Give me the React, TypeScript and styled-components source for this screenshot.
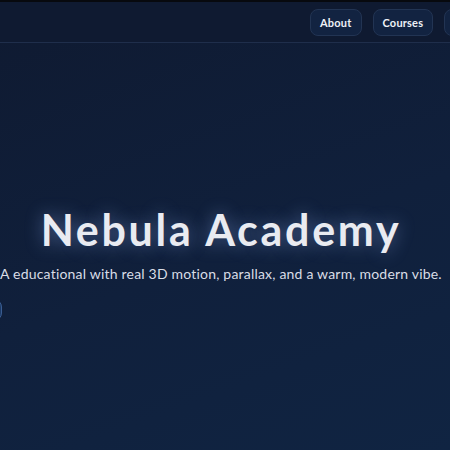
import React from "react";
import styled, { createGlobalStyle } from "styled-components";

const Global = createGlobalStyle`
  html, body {
    margin: 0;
    padding: 0;
    background: #0f1b33;
  }
  body {
    font-family: "Lato", "Open Sans", sans-serif;
    overflow: hidden;
  }
`;

const Page = styled.div`
  width: 450px;
  height: 450px;
  overflow: hidden;
  display: flex;
  flex-direction: column;
  background: linear-gradient(160deg, #0f1a31 0%, #10203c 55%, #102442 100%);
  border-top: 2px solid #07090e;
  box-sizing: border-box;
`;

const Header = styled.header`
  height: 41px;
  flex: none;
  display: flex;
  align-items: center;
  padding-left: 310px;
  background: #0f1a31;
  border-bottom: 1px solid #1f2e4b;
  box-sizing: border-box;
`;

const Nav = styled.nav`
  display: flex;
  gap: 11px;
  flex: none;
`;

const NavButton = styled.button`
  height: 27px;
  padding: 0 9px;
  border-radius: 8px;
  border: 1px solid #223453;
  background: #122341;
  color: #eef1f6;
  font-family: "Lato", sans-serif;
  font-weight: 700;
  font-size: 11px;
  letter-spacing: 0.2px;
  cursor: pointer;
`;

const Hero = styled.main`
  flex: 1;
  display: flex;
  flex-direction: column;
  align-items: center;
  padding-top: 163px;
  width: 442px;
`;

const Title = styled.h1`
  margin: 0;
  font-family: "Lato", sans-serif;
  font-weight: 700;
  font-size: 43px;
  line-height: 48px;
  color: #e9ebf1;
  letter-spacing: 2.7px;
  text-shadow: 0 0 18px rgba(150, 185, 255, 0.45);
`;

const Subtitle = styled.p`
  margin: 11px 0 0;
  white-space: nowrap;
  font-family: "Lato", sans-serif;
  font-size: 14px;
  letter-spacing: 0.2px;
  color: #d9dde6;
`;

const Actions = styled.div`
  align-self: flex-start;
  display: flex;
  margin-top: 17px;
  margin-left: -118px;
`;

const CtaButton = styled.button`
  width: 120px;
  height: 22px;
  border-radius: 8px;
  border: 1px solid #3a5d92;
  background: #1c3a66;
  color: #eef1f6;
  font-family: "Lato", sans-serif;
  font-weight: 700;
  font-size: 11px;
`;

export default function App() {
  return (
    <>
      <Global />
      <Page>
        <Header>
          <Nav>
            <NavButton>About</NavButton>
            <NavButton>Courses</NavButton>
            <NavButton>Contact</NavButton>
          </Nav>
        </Header>
        <Hero>
          <Title>Nebula Academy</Title>
          <Subtitle>
            A educational with real 3D motion, parallax, and a warm, modern vibe.
          </Subtitle>
          <Actions>
            <CtaButton>Explore</CtaButton>
          </Actions>
        </Hero>
      </Page>
    </>
  );
}
